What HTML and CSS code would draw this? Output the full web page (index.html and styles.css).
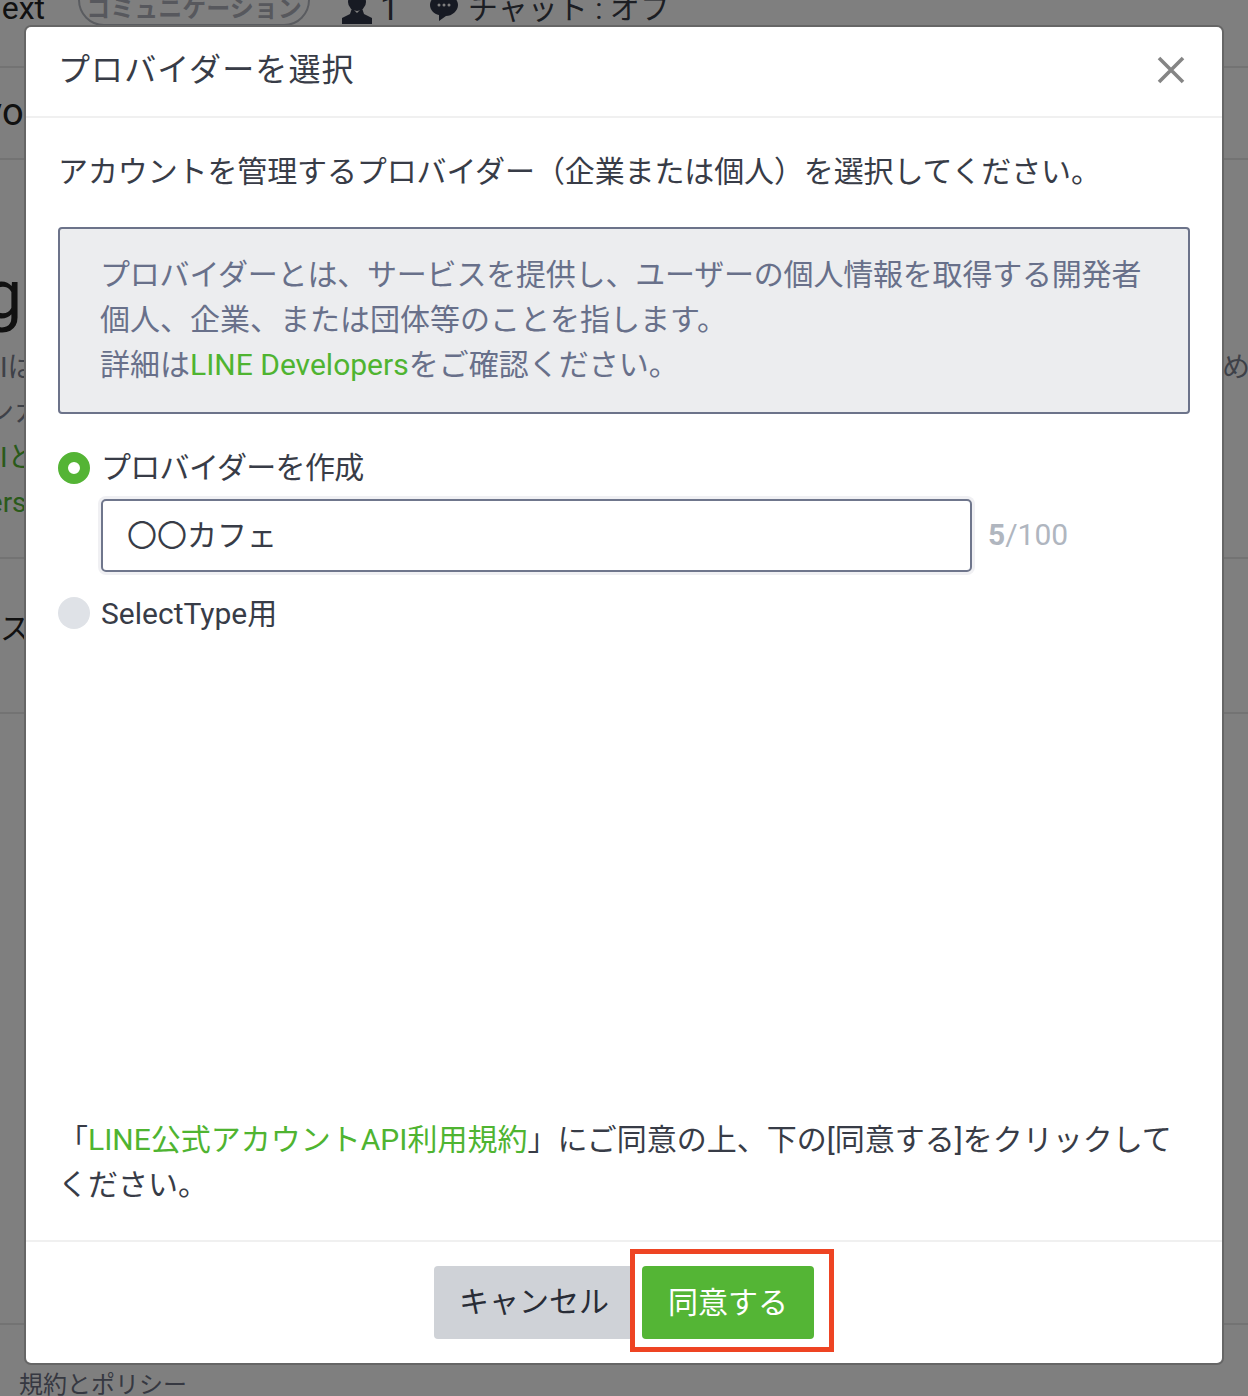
FILE: index.html
```html
<!DOCTYPE html>
<html lang="ja">
    <head>
        <meta charset="UTF-8">
        <meta name="viewport" content="width=device-width, initial-scale=1.0">
        <title>プロバイダーを選択</title>
        <link rel="stylesheet" href="styles.css">
    </head>
    <body>
        <div class="page">
            <div class="topbar">
                <span class="top-name">next</span>
                <span class="pill">コミュニケーション</span>
                <svg class="icon-person" width="30" height="26" viewBox="0 0 30 26">
                    <circle cx="15" cy="2" r="9" fill="#2f3447"/>
                    <path d="M10 8 L15 13 L20 8 L22 14 L30 18 L30 24 L0 24 L0 18 L8 14 Z" fill="#2f3447"/>
                </svg>
                <span class="top-count">1</span>
                <svg class="icon-chat" width="28" height="26" viewBox="0 0 28 26">
                    <path d="M14 -6 C22 -6 28 -1 28 5 C28 11 22 16 16 16 L9 21 L9 15 C4 14 0 10 0 5 C0 -1 6 -6 14 -6 Z" fill="#2f3447"/>
                    <circle cx="9" cy="5" r="1.5" fill="#fff"/>
                    <circle cx="14" cy="5" r="1.5" fill="#fff"/>
                    <circle cx="19" cy="5" r="1.5" fill="#fff"/>
                </svg>
                <span class="top-chat">チャット : オフ</span>
            </div>
            <div class="row row-name"><span class="clip-left">Provo</span></div>
            <div class="row row-main">
                <div class="big-title">g</div>
                <div class="main-line grey"><span class="cut-api">APIは</span><span class="cut-right">め</span></div>
                <div class="main-line grey"><span class="cut-link">リンカ</span></div>
                <div class="main-line green"><span class="cut-api">APIと</span></div>
                <div class="main-line green"><span class="cut-dev">Developers</span></div>
            </div>
            <div class="row row-status"><span>ス</span></div>
            <div class="row row-empty"></div>
            <div class="bottom-link">規約とポリシー</div>
        </div>

        <div class="overlay">
            <div class="modal">
                <div class="modal-head">
                    <h3>プロバイダーを選択</h3>
                    <svg class="close" width="28" height="28" viewBox="0 0 28 28">
                        <path d="M2 2 L26 26 M26 2 L2 26" stroke="#858585" stroke-width="3.6" fill="none"/>
                    </svg>
                </div>
                <div class="modal-body">
                    <p class="lead">アカウントを管理するプロバイダー（企業または個人）を選択してください。</p>
                    <div class="info">
                        <p class="info-first">プロバイダーとは、サービスを提供し、ユーザーの個人情報を取得する開発者</p>
                        <p>個人、企業、または団体等のことを指します。</p>
                        <p>詳細は<a href="#">LINE Developers</a>をご確認ください。</p>
                    </div>
                    <div class="choice choice-first">
                        <span class="radio radio-on"></span>
                        <span class="choice-label">プロバイダーを作成</span>
                    </div>
                    <div class="field-row">
                        <input class="field" type="text" value="〇〇カフェ">
                        <span class="counter"><b>5</b>/100</span>
                    </div>
                    <div class="choice choice-second">
                        <span class="radio"></span>
                        <span class="choice-label-plain">SelectType用</span>
                    </div>
                    <p class="terms">「<a href="#">LINE公式アカウントAPI利用規約</a>」にご同意の上、下の[同意する]をクリックしてください。</p>
                </div>
                <div class="modal-foot">
                    <button class="btn btn-cancel">キャンセル</button>
                    <div class="agree-wrap">
                        <button class="btn btn-agree">同意する</button>
                        <div class="callout"></div>
                    </div>
                </div>
            </div>
        </div>
    </body>
</html>
```

FILE: styles.css
```css
* {
    box-sizing: border-box;
}
html, body {
    margin: 0;
    height: 100%;
}
body {
    position: relative;
    height: 1396px;
    overflow: hidden;
    background-color: #fff;
    font-family: Roboto, "Noto Sans CJK JP", sans-serif;
    color: #383c47;
}
p, h3 {
    margin: 0;
    font-weight: normal;
}
a {
    color: #4fb431;
    text-decoration: none;
}

/* page behind the dialog */
.page {
    height: 1396px;
    overflow: hidden;
    font-size: 30px;
}
.topbar {
    display: flex;
    align-items: flex-start;
    height: 68px;
    border-bottom: 2px solid #e6e6e6;
}
.top-name {
    flex: none;
    width: 94px;
    margin-left: -16px;
    margin-top: -14px;
    line-height: 44px;
    font-size: 32px;
    color: #222;
}
.pill {
    flex: none;
    width: 232px;
    height: 52px;
    margin-top: -26px;
    padding-top: 18px;
    border: 2px solid #b5b8c0;
    border-radius: 26px;
    font-size: 24px;
    font-weight: bold;
    line-height: 30px;
    text-align: center;
    color: #aeb1ba;
}
.icon-person {
    margin-left: 32px;
    flex: none;
}
.top-count {
    flex: none;
    width: 50px;
    margin-left: 8px;
    margin-top: -14px;
    line-height: 44px;
    font-size: 34px;
}
.icon-chat {
    flex: none;
}
.top-chat {
    margin-left: 10px;
    margin-top: -13px;
    line-height: 44px;
    white-space: nowrap;
}
.row {
    border-bottom: 2px solid #e6e6e6;
    overflow: hidden;
}
.row-name {
    height: 92px;
    padding-top: 22px;
    line-height: 44px;
    font-size: 38px;
    color: #222;
}
.clip-left {
    display: block;
    margin-left: -74px;
}
.row-main {
    height: 399px;
}
.big-title {
    margin-top: 90px;
    margin-left: -16px;
    height: 95px;
    line-height: 90px;
    font-size: 68px;
    color: #222;
}
.main-line {
    display: flex;
    justify-content: space-between;
    height: 45px;
    line-height: 45px;
    font-size: 28px;
    white-space: nowrap;
}
.grey {
    color: #7d8290;
}
.green {
    color: #54b435;
}
.cut-api {
    margin-left: -36px;
}
.cut-link {
    margin-left: -42px;
}
.cut-dev {
    margin-left: -112px;
}
.cut-right {
    margin-right: -2px;
}
.row-status {
    height: 155px;
    padding-top: 48px;
    line-height: 44px;
    color: #222;
}
.row-empty {
    height: 611px;
}
.bottom-link {
    margin-top: 44px;
    padding-left: 19px;
    font-size: 24px;
    line-height: 32px;
    color: #6c7183;
}

/* dialog */
.overlay {
    position: absolute;
    top: 0;
    left: 0;
    width: 100%;
    height: 100%;
    padding: 27px 26px 33px;
    background-color: rgba(0, 0, 0, 0.5);
}
.modal {
    display: flex;
    flex-direction: column;
    height: 100%;
    background-color: #fff;
    border-radius: 5px;
    box-shadow: 0 0 0 2px #666;
}
.modal-head {
    display: flex;
    justify-content: space-between;
    align-items: center;
    height: 91px;
    padding: 0 37px 3px 34px;
    border-bottom: 2px solid #f0f0f0;
}
.modal-head h3 {
    font-size: 32px;
    letter-spacing: 1.1px;
    line-height: 44px;
    margin-left: -2px;
    color: #383c47;
}
.modal-body {
    flex: 1;
    display: flex;
    flex-direction: column;
    padding: 31px 32px 33px;
    font-size: 30px;
    line-height: 45px;
}
.lead {
    letter-spacing: -0.12px;
}
.info {
    margin-top: 33px;
    padding: 23px 40px 25px;
    border: 2px solid #6c738a;
    border-radius: 4px;
    background-color: #ecedef;
    color: #68708a;
    white-space: nowrap;
}
.info-first {
    letter-spacing: -0.2px;
}
.choice {
    display: flex;
    align-items: center;
}
.choice-first {
    margin-top: 31px;
}
.choice-second {
    margin-top: 18px;
}
.radio {
    flex: none;
    width: 32px;
    height: 32px;
    border-radius: 50%;
    background-color: #dfe2e7;
}
.radio-on {
    border: 10px solid #54b435;
    background-color: #fff;
}
.choice-label {
    margin-left: 11px;
    letter-spacing: -0.7px;
}
.choice-label-plain {
    margin-left: 11px;
    padding-top: 3px;
    line-height: 42px;
}
.field-row {
    display: flex;
    align-items: center;
    margin-top: 9px;
    margin-left: 43px;
}
.field {
    width: 871px;
    height: 73px;
    padding: 0 24px 5px;
    border: 2px solid #6f768c;
    border-radius: 5px;
    box-shadow: 0 0 0 3px #f0f0f3;
    font-family: Roboto, "Noto Sans CJK JP", sans-serif;
    font-size: 30px;
    color: #383c47;
    outline: none;
}
.counter {
    margin-left: 16px;
    margin-bottom: 2px;
    color: #b0b6bf;
}
.counter b {
    font-weight: bold;
}
.terms {
    margin-top: auto;
}

.modal-foot {
    display: flex;
    justify-content: center;
    gap: 8px;
    padding: 24px 0;
    border-top: 2px solid #f0f0f0;
}
.btn {
    height: 73px;
    border: none;
    border-radius: 4px;
    font-family: Roboto, "Noto Sans CJK JP", sans-serif;
    font-size: 30px;
}
.btn-cancel {
    width: 200px;
    padding: 0 0 8px;
    background-color: #cfd2d7;
    color: #282c36;
}
.btn-agree {
    display: block;
    width: 172px;
    padding: 0 0 6px;
    background-color: #54b535;
    color: #fff;
}
.agree-wrap {
    position: relative;
}
.callout {
    position: absolute;
    top: -17px;
    right: -20px;
    bottom: -13px;
    left: -12px;
    border: 5px solid #ee4423;
}
```
